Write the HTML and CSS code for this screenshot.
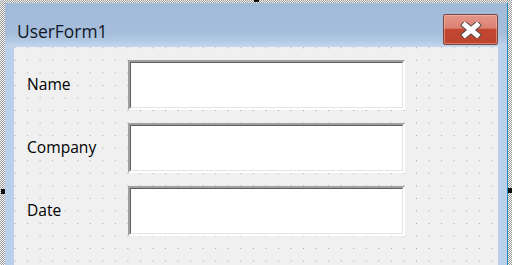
FILE: index.html
```html
<!DOCTYPE html>
<html>
<head>
<meta charset="utf-8">
<link rel="stylesheet" href="styles.css">
</head>
<body>
<div class="stage">
  <div class="window">
    <div class="titlebar">
      <span class="title">UserForm1</span>
      <button class="close" aria-label="Close">
        <svg width="22" height="16" viewBox="0 0 22 16">
          <path d="M5 3 L17 13 M17 3 L5 13" stroke="#5a4a48" stroke-width="7" stroke-linecap="square" fill="none"/>
          <path d="M5 3 L17 13 M17 3 L5 13" stroke="#ffffff" stroke-width="5" stroke-linecap="square" fill="none"/>
        </svg>
      </button>
    </div>
    <div class="frame">
      <div class="client">
        <div class="row"><span class="label">Name</span><div class="textbox"><div class="inner"></div></div></div>
        <div class="row"><span class="label">Company</span><div class="textbox"><div class="inner"></div></div></div>
        <div class="row"><span class="label">Date</span><div class="textbox"><div class="inner"></div></div></div>
      </div>
    </div>
  </div>
  <span class="handle handle-left"></span>
  <span class="handle handle-right"></span>
  <span class="handle handle-top"></span>
</div>
</body>
</html>
```
FILE: styles.css
```css
html, body {
  margin: 0;
  padding: 0;
  width: 512px;
  height: 265px;
  overflow: hidden;
}
body {
  background: repeating-conic-gradient(#9c9c9c 0 25%, #f6f6f6 0 50%) 0 0 / 2px 2px;
  font-family: "Open Sans", "Noto Sans", sans-serif;
}
.stage {
  position: relative;
  width: 512px;
  height: 265px;
  padding: 3px 4px 0 5px;
  box-sizing: border-box;
}
.window {
  width: 503px;
  height: 262px;
  display: flex;
  flex-direction: column;
  border-right: 1px solid #1f8ab3;
  box-sizing: border-box;
  background: #b9d1ea;
}
.titlebar {
  height: 44px;
  flex: none;
  display: flex;
  align-items: flex-start;
  justify-content: space-between;
  background: linear-gradient(to bottom, #a1bad8 0px, #a6bedb 30px, #b3c9e3 38px, #c4d6ec 44px);
  box-sizing: border-box;
  padding: 0 9px 0 12px;
}
.title {
  font-size: 17.4px;
  color: #101828;
  margin-top: 16px;
  line-height: 24px;
}
.close {
  margin-top: 11px;
  width: 55px;
  height: 31px;
  padding: 0;
  border: 1px solid #7a4740;
  border-radius: 2px;
  background: linear-gradient(to bottom, #e3978b 0, #dc8172 45%, #c3472f 50%, #bb4430 100%);
  box-shadow: inset 0 0 0 1px rgba(255, 200, 190, 0.45);
  display: flex;
  align-items: center;
  justify-content: center;
}
.frame {
  flex: 1;
  padding: 0 9px 0 9px;
  display: flex;
}
.client {
  flex: 1;
  background-color: #f0f0f0;
  background-image: radial-gradient(circle at 0.5px 0.5px, #a0a0a0 0.8px, transparent 0.9px);
  background-size: 12.55px 12.55px;
  background-position: 0.5px 0.3px;
  padding: 13px 0 0 13px;
  display: flex;
  flex-direction: column;
  gap: 13px;
}
.row {
  display: flex;
  align-items: center;
  height: 50px;
}
.label {
  width: 101px;
  font-size: 15.6px;
  color: #000;
  line-height: 20px;
  margin-top: -2px;
}
.textbox {
  width: 277px;
  height: 50px;
  box-sizing: border-box;
  border: 2px solid;
  border-color: #a0a0a0 #ffffff #ffffff #a0a0a0;
}
.inner {
  height: 100%;
  box-sizing: border-box;
  border: 1px solid;
  border-color: #5f5f5f #e3e3e3 #e3e3e3 #5f5f5f;
  background: #fff;
}
.handle {
  position: absolute;
  width: 4px;
  height: 5px;
  background: #111;
}
.handle-left { left: 1px; top: 189px; }
.handle-right { left: 508px; top: 188px; }
.handle-top { left: 254px; top: 0; width: 5px; height: 2px; }
```
